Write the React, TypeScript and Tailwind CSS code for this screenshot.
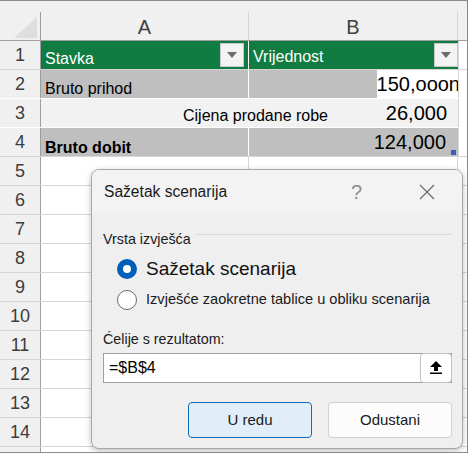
import React from "react";

const cellFont = { fontFamily: '"Liberation Sans", Arial, sans-serif' };

function RowHead({ n }: { n: number }) {
  return (
    <div className="w-[41px] h-full shrink-0 bg-[#f0f0f0] border-r border-[#9e9e9e] flex items-center justify-center text-[18px] text-[#3c3c3c]">
      {n}
    </div>
  );
}

function Dropdown() {
  return (
    <div className="w-[24px] h-[24px] bg-[#f3f3f3] border border-[#c8c8c8] flex items-center justify-center">
      <svg width="10" height="6" viewBox="0 0 10 6">
        <path d="M0 0 L10 0 L5 6 Z" fill="#6b6b6b" />
      </svg>
    </div>
  );
}

function EmptyRow({ n }: { n: number }) {
  return (
    <div className="flex h-[29px] border-b border-[#d6d6d6]">
      <RowHead n={n} />
      <div className="w-[208px] shrink-0 border-r border-[#d6d6d6]" />
      <div className="w-[209px] shrink-0 border-r border-[#d6d6d6]" />
      <div className="flex-1" />
    </div>
  );
}

export default function App() {
  return (
    <div
      className="relative w-[468px] h-[453px] overflow-hidden bg-white border-t border-r border-b border-[#8a8a8a]"
      style={cellFont}
    >
      {/* top strip */}
      <div className="h-[11px] bg-[#f0f0f0]" />
      {/* column headers */}
      <div className="flex h-[29px] bg-[#f0f0f0] border-b border-[#9e9e9e] text-[20px] text-[#404040]">
        <div className="w-[41px] shrink-0 border-r border-[#9e9e9e] relative">
          <svg className="absolute left-[14px] top-[5px]" width="23" height="21" viewBox="0 0 23 21">
            <path d="M23 0 L23 21 L0 21 Z" fill="#dedede" />
          </svg>
        </div>
        <div className="w-[208px] shrink-0 border-r border-[#d6d6d6] flex items-center justify-center pt-[2px]">
          A
        </div>
        <div className="w-[209px] shrink-0 border-r border-[#d6d6d6] flex items-center justify-center pt-[2px]">
          B
        </div>
        <div className="flex-1" />
      </div>

      {/* row 1 */}
      <div className="flex h-[29px] border-b border-[#d6d6d6]">
        <RowHead n={1} />
        <div className="w-[208px] shrink-0 h-[28px] bg-[#107c41] border-r border-white flex items-start pt-[2px] pr-[4px]">
          <span className="flex-1 text-white text-[16px] pl-[4px] pt-[4px]">Stavka</span>
          <Dropdown />
        </div>
        <div className="w-[209px] shrink-0 h-[28px] bg-[#107c41] flex items-start pt-[2px]">
          <span className="flex-1 text-white text-[16px] pl-[4px] pt-[2px]">Vrijednost</span>
          <Dropdown />
        </div>
        <div className="flex-1 border-l border-[#d6d6d6]" />
      </div>

      {/* row 2 */}
      <div className="flex h-[29px] border-b border-white">
        <RowHead n={2} />
        <div className="w-[208px] shrink-0 bg-[#bfbfbf] border-r border-white flex items-end">
          <span className="text-[16px] leading-[20px] text-black pl-[4px] mb-[-1px]">Bruto prihod</span>
        </div>
        <div className="w-[209px] shrink-0 bg-[#bfbfbf] flex">
          <div className="flex-1" />
          <div className="w-[81px] bg-white flex items-center justify-end">
            <span className="text-[20px] text-black whitespace-nowrap mr-[-2px]">150,ooon</span>
          </div>
        </div>
        <div className="flex-1 border-l border-[#d6d6d6]" />
      </div>

      {/* row 3 */}
      <div className="flex h-[29px] border-b border-white">
        <RowHead n={3} />
        <div className="flex bg-[#f2f2f2]">
          <div className="w-[208px] shrink-0 relative z-10 flex items-center">
            <span className="text-[16px] text-black pl-[142px] whitespace-nowrap pt-[5px]">Cijena prodane robe</span>
          </div>
          <div className="w-[209px] shrink-0 flex items-center justify-end pr-[11px]">
            <span className="text-[20px] text-black">26,000</span>
          </div>
        </div>
        <div className="flex-1 border-l border-[#d6d6d6]" />
      </div>

      {/* row 4 */}
      <div className="flex h-[29px] border-b border-[#d6d6d6]">
        <RowHead n={4} />
        <div className="w-[208px] shrink-0 bg-[#bfbfbf] border-r border-white flex items-end">
          <span className="text-[16px] leading-[20px] font-bold text-black pl-[4px] mb-[-2px]">Bruto dobit</span>
        </div>
        <div className="w-[209px] shrink-0 bg-[#bfbfbf] relative flex items-center justify-end pr-[12px]">
          <span className="text-[20px] text-black">124,000</span>
          <div className="absolute right-[2px] bottom-[1px] w-[5px] h-[5px] bg-[#3b5cbf]" />
        </div>
        <div className="flex-1 border-l border-[#d6d6d6]" />
      </div>

      {[5, 6, 7, 8, 9, 10, 11, 12, 13, 14].map((n) => (
        <EmptyRow key={n} n={n} />
      ))}
      <div className="flex h-[10px]">
        <div className="w-[41px] shrink-0 bg-[#f0f0f0] border-r border-[#9e9e9e]" />
      </div>

      {/* dialog */}
      <div className="absolute left-[91px] top-[168px] w-[372px] h-[280px] rounded-[8px] border border-[#a8a8a8] bg-[#efefef] shadow-[0_2px_6px_rgba(0,0,0,0.25)] overflow-hidden flex flex-col">
        <div className="h-[43px] bg-[#f3f3f3] flex items-center pl-[12px] pr-[27px]">
          <span className="flex-1 text-[15.6px] text-[#1a1a1a]">Sažetak scenarija</span>
          <span className="text-[20px] text-[#8c8c8c] font-light mr-[57px] leading-none">?</span>
          <svg width="16" height="16" viewBox="0 0 16 16">
            <path d="M1 1 L15 15 M15 1 L1 15" stroke="#6e6e6e" strokeWidth="1.3" fill="none" />
          </svg>
        </div>
        <div className="flex-1 flex flex-col pl-[11px] pr-[10px] pt-[17px]">
          <div className="flex items-start h-[18px]">
            <span className="text-[14.3px] leading-[18px] text-[#1a1a1a]">Vrsta izvješća</span>
            <div className="flex-1 h-px bg-[#d9d9d9] mt-[4px] ml-[4px]" />
          </div>
          <div className="flex items-center h-[24px] mt-[9px] pl-[14px]">
            <div className="w-[20px] h-[20px] rounded-full bg-[#005fb8] flex items-center justify-center">
              <div className="w-[8px] h-[8px] rounded-full bg-white" />
            </div>
            <span className="ml-[9px] text-[19px] text-[#111]">Sažetak scenarija</span>
          </div>
          <div className="flex items-center h-[24px] mt-[7px] pl-[14px]">
            <div className="w-[20px] h-[20px] rounded-full bg-white border border-[#6a6a6a]" />
            <span className="ml-[9px] text-[14.6px] text-[#1a1a1a]">
              Izvješće zaokretne tablice u obliku scenarija
            </span>
          </div>
          <div className="h-[18px] mt-[18px] text-[14.3px] leading-[18px] text-[#1a1a1a]">
            Ćelije s rezultatom:
          </div>
          <div className="mt-[5px] h-[30px] bg-white border border-[#a0a0a0] flex items-center">
            <span className="flex-1 pl-[5px] text-[16px] text-black">=$B$4</span>
            <div className="w-[32px] h-[30px] -mt-[1px] -mr-[1px] rounded-[4px] border border-[#c4c4c4] bg-white flex items-center justify-center">
              <svg width="12" height="13" viewBox="0 0 12 13">
                <path d="M6 0 L12 6 L8 6 L8 10 L4 10 L4 6 L0 6 Z" fill="#000" />
                <rect x="0" y="11.5" width="12" height="1.5" fill="#000" />
              </svg>
            </div>
          </div>
          <div className="flex justify-end gap-[16px] mt-[19px]">
            <button className="w-[124px] h-[36px] rounded-[4px] bg-[#e1eef9] border border-[#0f6cbd] text-[15px] text-[#1a1a1a]">
              U redu
            </button>
            <button className="w-[124px] h-[36px] rounded-[4px] bg-[#fcfcfc] border border-[#d2d2d2] text-[15px] text-[#1a1a1a]">
              Odustani
            </button>
          </div>
        </div>
      </div>
    </div>
  );
}
